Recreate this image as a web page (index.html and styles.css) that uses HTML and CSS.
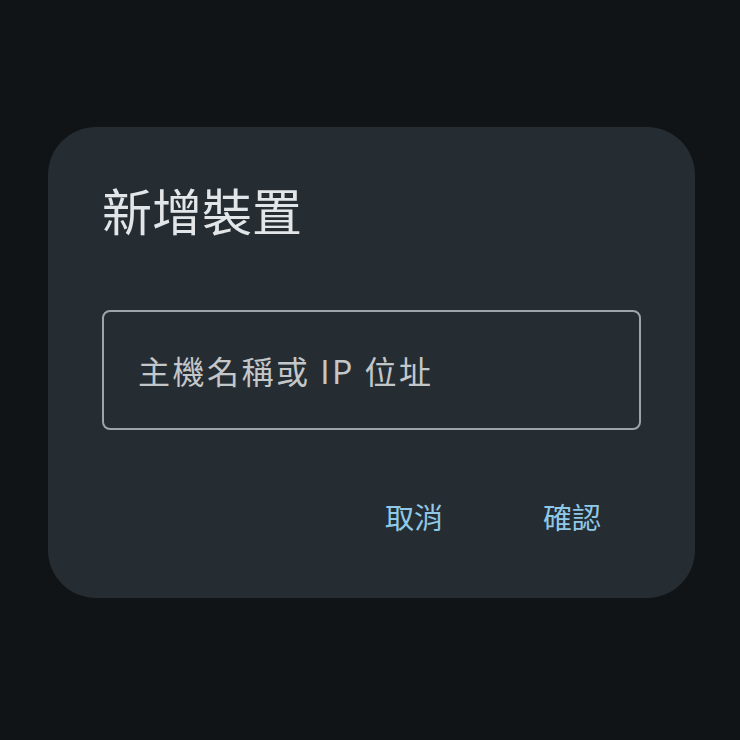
FILE: index.html
```html
<!DOCTYPE html>
<html lang="zh-Hant">
<head>
<meta charset="utf-8">
<link rel="stylesheet" href="styles.css">
</head>
<body>
<div class="dialog">
  <h1 class="title">新增裝置</h1>
  <div class="field"><span class="placeholder">主機名稱或 IP 位址</span></div>
  <div class="actions">
    <button class="btn">取消</button>
    <button class="btn">確認</button>
  </div>
</div>
</body>
</html>
```
FILE: styles.css
```css
html, body { margin: 0; padding: 0; }
body {
  background: #111416;
  width: 740px;
  height: 740px;
  font-family: "Noto Sans CJK TC", "Noto Sans", sans-serif;
  padding-top: 127px;
  box-sizing: border-box;
}
.dialog {
  margin-left: 48px;
  width: 647px;
  height: 471px;
  box-sizing: border-box;
  background: #262d32;
  border-radius: 48px;
  padding: 52px 54px 0 54px;
}
.title {
  margin: 0;
  font-size: 50px;
  font-weight: 400;
  line-height: 60px;
  color: #e3e6e8;
}
.field {
  margin-top: 71px;
  height: 120px;
  box-sizing: border-box;
  border: 2px solid #9fa4a8;
  border-radius: 8px;
  display: flex;
  align-items: center;
  padding-left: 34px;
}
.placeholder {
  font-size: 32px;
  color: #c3c7ca;
  letter-spacing: 2.5px;
}
.actions {
  display: flex;
  justify-content: flex-end;
  gap: 72px;
  margin-top: 66px;
  padding-right: 26px;
}
.btn {
  background: none;
  border: none;
  font-family: inherit;
  font-size: 29px;
  line-height: 40px;
  color: #8fc9e8;
  padding: 0 14px;
}
```
